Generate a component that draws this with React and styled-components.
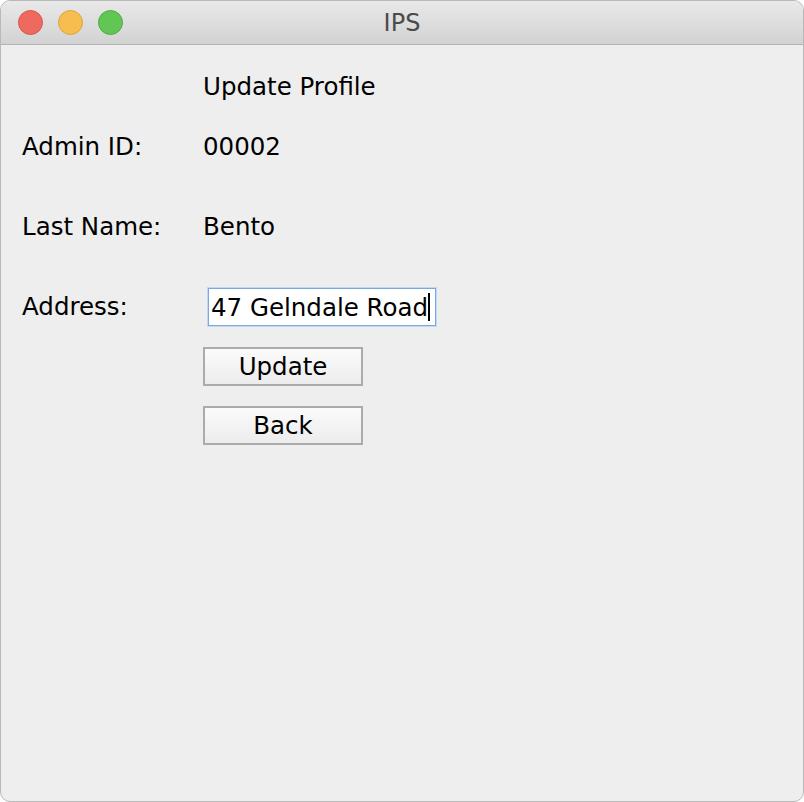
import React, { useState } from "react";
import styled, { createGlobalStyle } from "styled-components";

const GlobalStyle = createGlobalStyle`
  html, body {
    margin: 0;
    padding: 0;
    background: #ffffff;
  }
  * {
    box-sizing: border-box;
  }
`;

const Window = styled.div`
  width: 804px;
  height: 802px;
  display: flex;
  flex-direction: column;
  background-color: #eeeeee;
  border: 1px solid #b9b9b9;
  border-radius: 10px;
  overflow: hidden;
  font-family: "DejaVu Sans", "Liberation Sans", sans-serif;
`;

const TitleBar = styled.div`
  height: 44px;
  flex-shrink: 0;
  display: flex;
  align-items: center;
  position: relative;
  background: linear-gradient(#e9e9e9, #d2d2d2);
  border-bottom: 1px solid #b3b3b3;
`;

const Lights = styled.div`
  display: flex;
  gap: 15px;
  padding-left: 17px;
`;

const Light = styled.span`
  width: 25px;
  height: 25px;
  border-radius: 50%;
  background-color: ${(props) => props.$fill};
  border: 1px solid ${(props) => props.$edge};
`;

const Title = styled.div`
  position: absolute;
  left: 0;
  right: 0;
  text-align: center;
  font-size: 24px;
  color: #4b4b4b;
  pointer-events: none;
`;

const Content = styled.div`
  flex: 1;
  display: flex;
  flex-direction: column;
  padding: 0 0 0 21px;
  color: #000;
  font-size: 24.5px;
`;

const Row = styled.div`
  display: grid;
  grid-template-columns: 181px auto;
  align-items: center;
  height: ${(props) => props.$h || 40}px;
  margin-top: ${(props) => props.$top}px;
`;

const Label = styled.label`
  white-space: nowrap;
  line-height: 1;
`;

const Value = styled.span`
  white-space: nowrap;
  line-height: 1;
`;

const InputBox = styled.div`
  position: relative;
  width: 228px;
  height: 38px;
  margin-left: 5px;
`;

const Input = styled.input`
  width: 100%;
  height: 100%;
  padding: 0 2px;
  border: 1px solid #7aa8e2;
  box-shadow: 0 0 0 1px #c3d8f3;
  background: #fff;
  font-family: inherit;
  font-size: 24.5px;
  color: #000;
  outline: none;
  caret-color: transparent;
`;

const Caret = styled.span`
  position: absolute;
  top: 5px;
  left: ${(props) => props.$x}px;
  width: 2px;
  height: 28px;
  background: #000;
  pointer-events: none;
`;

const Button = styled.button`
  width: 160px;
  height: 39px;
  border: 2px solid #ababab;
  background: linear-gradient(#fbfbfb, #ececec);
  font-family: inherit;
  font-size: 24.5px;
  color: #000;
  padding: 0;
  cursor: pointer;
`;

const UpdateProfile = () => {
  const [address, setAddress] = useState("47 Gelndale Road");

  return (
    <Window>
      <TitleBar>
        <Lights>
          <Light $fill="#ee6a5f" $edge="#d5564b" />
          <Light $fill="#f7be4f" $edge="#dca23d" />
          <Light $fill="#62c655" $edge="#4fab43" />
        </Lights>
        <Title>IPS</Title>
      </TitleBar>
      <Content>
        <Row $top={22}>
          <span />
          <Value>Update Profile</Value>
        </Row>
        <Row $top={20}>
          <Label>Admin ID:</Label>
          <Value>00002</Value>
        </Row>
        <Row $top={40}>
          <Label>Last Name:</Label>
          <Value>Bento</Value>
        </Row>
        <Row $top={41} $h={38}>
          <Label htmlFor="address">Address:</Label>
          <InputBox>
            <Input
              id="address"
              value={address}
              onChange={(e) => setAddress(e.target.value)}
            />
            <Caret $x={220} />
          </InputBox>
        </Row>
        <Row $top={21} $h={39}>
          <span />
          <Button>Update</Button>
        </Row>
        <Row $top={20} $h={39}>
          <span />
          <Button>Back</Button>
        </Row>
      </Content>
    </Window>
  );
};

export default function App() {
  return (
    <>
      <GlobalStyle />
      <UpdateProfile />
    </>
  );
}
